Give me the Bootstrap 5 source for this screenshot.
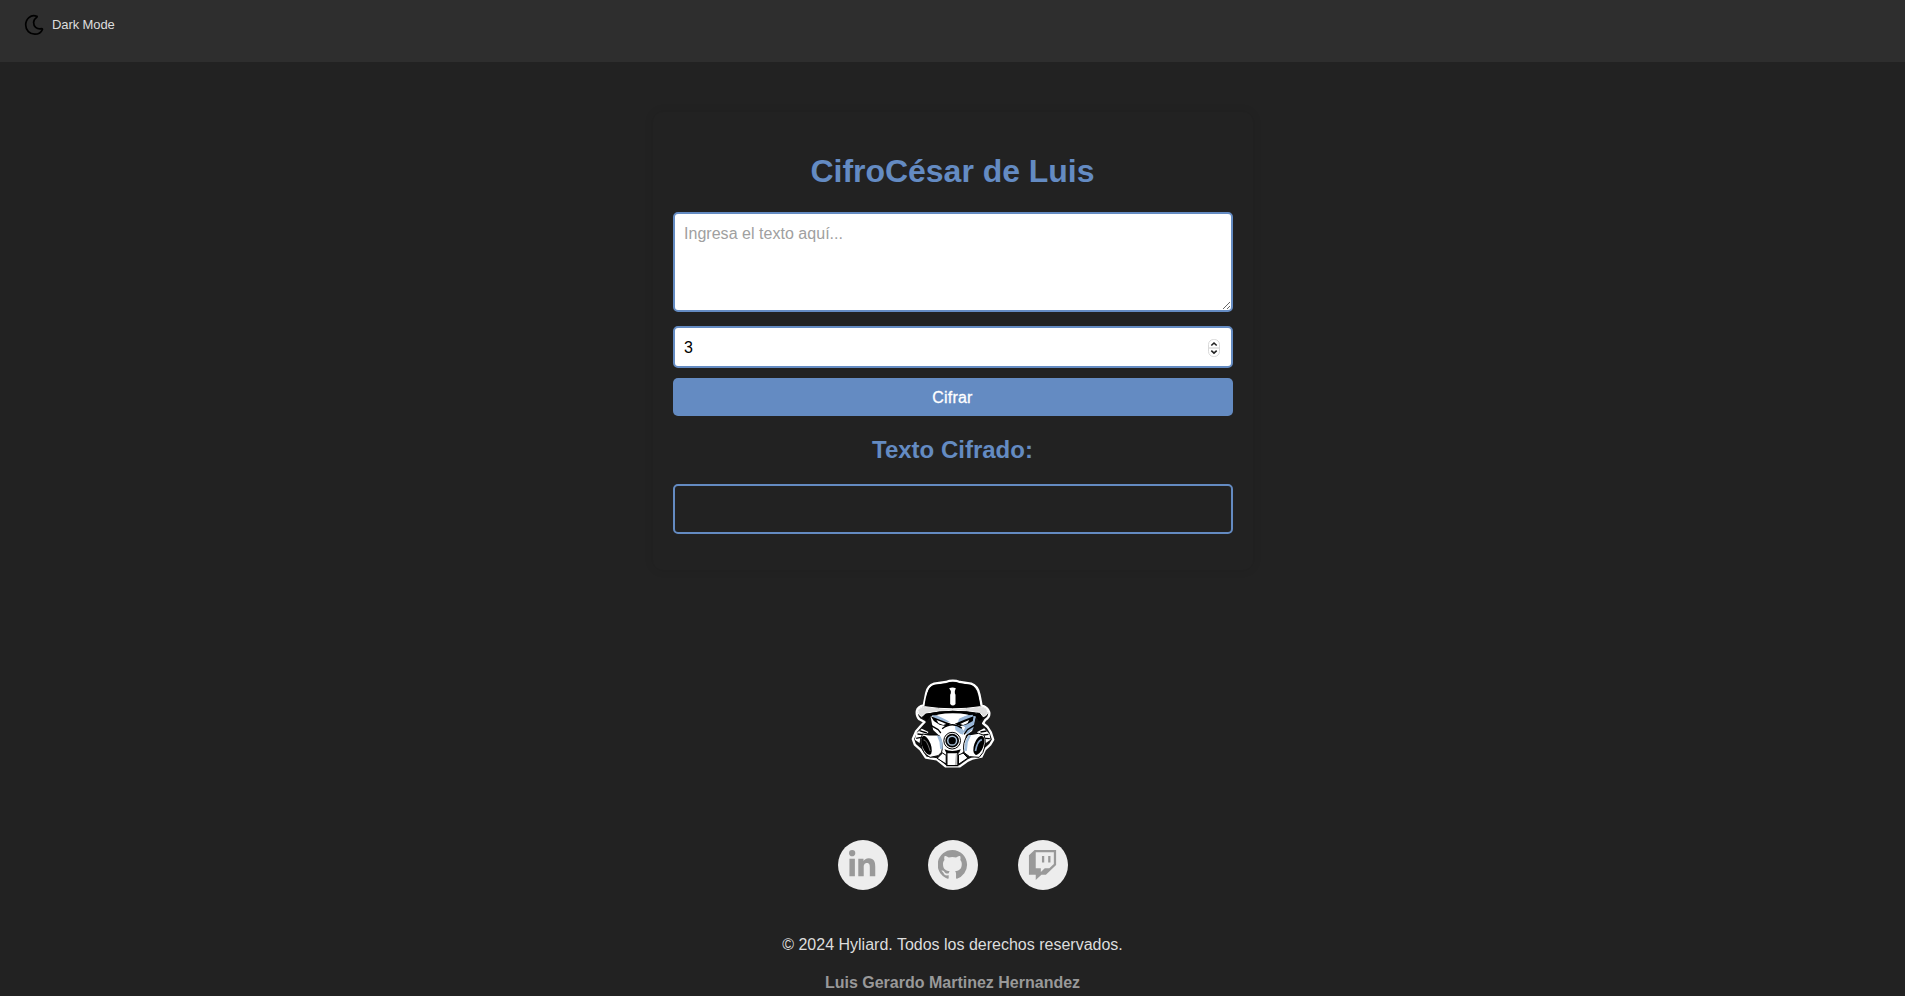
<!DOCTYPE html>
<html lang="es">
<head>
<meta charset="utf-8">
<meta name="viewport" content="width=device-width, initial-scale=1">
<title>CifroCésar de Luis</title>
<link href="https://cdn.jsdelivr.net/npm/bootstrap@5.3.0/dist/css/bootstrap.min.css" rel="stylesheet">
<style>
body{background:#222;color:#ddd;font-family:"Liberation Sans",Arial,sans-serif;height:996px;overflow:hidden;line-height:1.15}
.topbar{background:#2e2e2e;height:62px;padding:14px 24px}
.mode-label{font-size:13px;line-height:21px;letter-spacing:-.1px}
.cipher{width:600px;height:458px;margin-top:50px;padding:40px 20px 0;border-radius:10px;box-shadow:0 0 10px rgba(0,0,0,.1)}
.cipher h1{font-size:32px;font-weight:700;line-height:39px;color:#648bc2;margin:0 0 21px;letter-spacing:-.03px}
.cipher h2{font-size:24px;font-weight:700;line-height:28px;color:#648bc2;margin:20px 0 20px}
.cipher .form-control{border:2px solid #648bc2;border-radius:5px;background:#fff;color:#000;padding:10px 9.500px 8px;font-size:16px;line-height:20px}
.cipher textarea.form-control{height:100px;margin-bottom:14px;letter-spacing:.03px}
.cipher textarea::placeholder{color:#a0a0a0}
.number-wrap{height:42px;margin-bottom:10px}
.number-wrap input{appearance:textfield;-moz-appearance:textfield;height:42px}
.number-wrap input::-webkit-inner-spin-button{display:none}
.stepper{right:13px;top:13px}
.cifrar{height:38px;border-radius:5px;background:#648bc2;color:#fff;border:0;font-size:16px;padding:1px 0 0;letter-spacing:.2px;-webkit-text-stroke:.3px #fff}
.cifrar:hover{background:#557bb1;color:#fff}
.result{height:50px;border:2px solid #648bc2;border-radius:5px}
.logo{margin-top:100px}
.social{gap:40px;margin-top:66px}
.social a{width:50px;height:50px;background:#ededed;color:#999}
.copy{margin:45px 0 0;font-size:16px;line-height:20px}
.author{margin:18px 0 0;font-size:16px;line-height:20px;font-weight:700;color:#999}
</style>
</head>
<body class="d-flex flex-column align-items-center">
<header class="topbar w-100 d-flex align-items-start">
  <svg width="20" height="22" viewBox="0 0 20 22" fill="none" stroke="#000" stroke-width="1.700" stroke-linejoin="round"><path d="M12.600 2.200C6.600 .2 1.700 5 1.700 11c0 5.300 4.100 9.200 9.100 9.200 3.600 0 6.600-2 7.600-4.700.2-.7-.2-1-.8-.8C12.400 15.500 9.600 12.300 9.600 8.500c0-2 1-3.700 3.300-5.400.4-.4.2-.8-.3-.9z"/></svg>
  <span class="mode-label ms-2">Dark Mode</span>
</header>
<main class="cipher d-flex flex-column text-center">
  <h1>CifroCésar de Luis</h1>
  <textarea class="form-control" placeholder="Ingresa el texto aquí..."></textarea>
  <div class="number-wrap position-relative">
    <input class="form-control" type="number" value="3">
    <svg class="stepper position-absolute" width="12" height="18" viewBox="0 0 12 18" fill="none"><rect x=".5" y=".5" width="11" height="17" rx="5" fill="#fff" stroke="#d9d9d9"/><path d="M1 9h10" stroke="#ddd" stroke-width="1.500"/><path d="M3.300 6.500 6 4l2.700 2.500M3.300 11.600 6 14.100l2.700-2.500" stroke="#222" stroke-width="1.600"/></svg>
  </div>
  <button class="btn cifrar" type="button">Cifrar</button>
  <h2>Texto Cifrado:</h2>
  <div class="result"></div>
</main>
<footer class="d-flex flex-column align-items-center">
  <svg class="logo" width="104" height="104" viewBox="1.500 -2 312 312" stroke-linejoin="round">
    <path fill="#111" stroke="#fff" stroke-width="7" d="M49 121Q52 107 70 104L77 68Q81 45 101 39L136 34Q157 26 178 34L212 39Q232 46 237 72L243 104Q262 110 266 124Q269 139 254 148L248 158L261 169L271 185L278 207L269 222L253 237L243 258L215 264L202 270L178 287L135 287L109 266L76 261L60 237L43 222L37 205L47 182L60 167L72 154L57 146Q47 136 49 121Z"/>
    <path fill="#fff" d="M88 126Q157 138 228 126L222 148L215 181L194 195L115 194L98 178Z"/>
    <path fill="#99b7d8" d="M182 134L228 128L223 150L218 174L200 190L188 184L194 170L172 156L176 143Z"/>
    <path fill="#000" d="M72 107Q78 50 101 43L138 38Q157 31 177 38L211 43Q231 49 239 107Q157 124 72 107Z"/>
    <path fill="#ddd" stroke="#fff" stroke-width="3" d="M53 119Q56 110 72 108Q157 121 240 108Q259 110 261 121Q264 133 248 138L238 125Q157 112 76 127L63 138Q50 131 53 119Z"/>
    <path fill="#000" d="M74 130Q157 111 240 130L247 145L235 151L225 137Q157 122 91 137L79 150L67 142Z"/>
    <path fill="#fff" d="M146 53Q156 48 166 53L163 61V68L165 72V100Q157 109 149 100V72L151 68V61Z"/>
    <path fill="#fff" d="M110 132Q157 124 204 132L180 142L159 153L133 142Z"/>
    <path fill="#99b7d8" d="M94 133L115 137L138 148L149 155L123 152L100 143ZM216 132L193 137L180 145L207 145L220 140Z"/>
    <path fill="#000" d="M91 137L122 149L151 159L138 167L117 162L100 151ZM219 137L190 148L163 159L178 167L200 161L217 151Z"/>
    <path fill="#fff" d="M108 148L126 155L137 160L128 163L114 158ZM206 148L190 155L179 160L188 163L201 158Z"/>
    <path fill="#fff" d="M47 188L64 174L84 184L72 196L60 200L57 217L43 207ZM230 184L251 173L267 190L270 207L255 218L249 198L233 191Z"/>
    <path fill="none" stroke="#000" stroke-width="4" d="M57 180L79 187M51 190L68 192M47 203L61 200M240 184L258 181M249 193L264 191M254 203L268 204"/>
    <path fill="#fff" d="M118 194L126 177Q155 153 184 177L196 194L191 240L172 261L141 260L120 241Z"/>
    <path fill="#a0bddb" d="M163 164L178 165L191 182L187 192L177 188L165 179Z"/>
    <path fill="none" stroke="#000" stroke-width="4" d="M121 187L113 177L91 164M191 191L201 177L222 164M125 174Q155 151 184 173"/>
    <path fill="#fff" stroke="#000" stroke-width="3" d="M66 190L84 193L110 193Q124 203 126 231Q127 246 113 255L89 260Q66 250 62 220Q59 203 66 190ZM202 193L234 188L251 194Q259 217 247 246L236 260L207 258L191 246Q184 217 202 193Z"/>
    <path fill="#a0bddb" d="M109 194L120 197Q129 215 126 236L119 235L117 214ZM195 211L204 194L212 193L202 215L199 241L191 240Z"/>
    <ellipse cx="78" cy="224" rx="13" ry="30" transform="rotate(-20 78 224)" fill="#000"/>
    <path d="M69 208Q78 205 89 241" fill="none" stroke="#aaa" stroke-width="2"/>
    <ellipse cx="235" cy="224" rx="14" ry="30" transform="rotate(20 235 224)" fill="#000"/>
    <path d="M244 207Q230 211 225 241" fill="none" stroke="#89a7ca" stroke-width="5"/>
    <circle cx="155" cy="210" r="25" fill="#fff" stroke="#000" stroke-width="3"/>
    <circle cx="155" cy="210" r="18" fill="#a7bfd6" stroke="#000" stroke-width="5"/>
    <circle cx="155" cy="210" r="11" fill="#000"/>
    <path d="M132 236Q154 246 181 236L176 246H137Z" fill="#000"/>
    <path d="M110 263L126 247L137 254V280ZM174 253L188 247L202 262L174 281Z" fill="#fff" stroke="#000" stroke-width="3"/>
    <path d="M139 246H172V285H139Z" fill="#fff" stroke="#000" stroke-width="4"/>
    <path d="M166 249H170V283H163Z" fill="#bbb"/>
  </svg>
  <nav class="social d-flex" aria-label="Redes sociales">
    <a href="#" class="rounded-circle d-flex align-items-center justify-content-center" aria-label="LinkedIn"><svg width="26.25" height="30" viewBox="0 0 448 512" fill="currentColor"><path d="M100.280 448H7.400V148.900h92.880zM53.790 108.100C24.090 108.100 0 83.500 0 53.800a53.790 53.790 0 0 1 107.580 0c0 29.700-24.100 54.300-53.790 54.300zM447.900 448h-92.680V302.400c0-34.700-.7-79.200-48.290-79.200-48.290 0-55.690 37.700-55.690 76.700V448h-92.780V148.900h89.080v40.800h1.300c12.400-23.500 42.690-48.300 87.880-48.300 94 0 111.280 61.900 111.280 142.300V448z"/></svg></a>
    <a href="#" class="rounded-circle d-flex align-items-center justify-content-center" aria-label="GitHub"><svg width="30" height="30" viewBox="0.200 0 16.300 16.300" fill="currentColor"><path d="M8 0C3.580 0 0 3.580 0 8c0 3.540 2.290 6.530 5.470 7.590.4.070.55-.17.55-.38 0-.19-.01-.82-.01-1.490-2.010.37-2.530-.49-2.690-.94-.09-.23-.48-.94-.82-1.130-.28-.15-.68-.52-.01-.53.63-.01 1.080.58 1.230.82.72 1.210 1.870.87 2.330.66.07-.52.28-.87.51-1.070-1.780-.2-3.640-.89-3.640-3.950 0-.87.31-1.590.82-2.150-.08-.2-.36-1.020.08-2.120 0 0 .67-.21 2.200.82.64-.18 1.320-.27 2-.27s1.360.09 2 .27c1.530-1.040 2.200-.82 2.200-.82.44 1.100.16 1.920.08 2.120.51.56.82 1.270.82 2.150 0 3.070-1.870 3.750-3.650 3.950.29.25.54.73.54 1.480 0 1.070-.01 1.930-.01 2.200 0 .21.15.46.55.38A8.010 8.010 0 0 0 16 8c0-4.420-3.580-8-8-8z"/></svg></a>
    <a href="#" class="rounded-circle d-flex align-items-center justify-content-center" aria-label="Twitch"><svg width="30" height="30" viewBox="8 0 512 512" fill="currentColor"><path d="M391.170 103.470H352.540v109.700h38.630ZM285 103H246.370V212.750H285ZM120.830 0 24.310 91.420V420.580H140.140V512l96.530-91.420h77.250L487.690 256V0ZM449.070 237.750l-77.220 73.120H294.610l-67.600 64v-64H140.140V36.580H449.070Z"/></svg></a>
  </nav>
  <p class="copy">© 2024 Hyliard. Todos los derechos reservados.</p>
  <p class="author">Luis Gerardo Martinez Hernandez</p>
</footer>
<script src="https://cdn.jsdelivr.net/npm/bootstrap@5.3.0/dist/js/bootstrap.bundle.min.js"></script>
</body>
</html>
